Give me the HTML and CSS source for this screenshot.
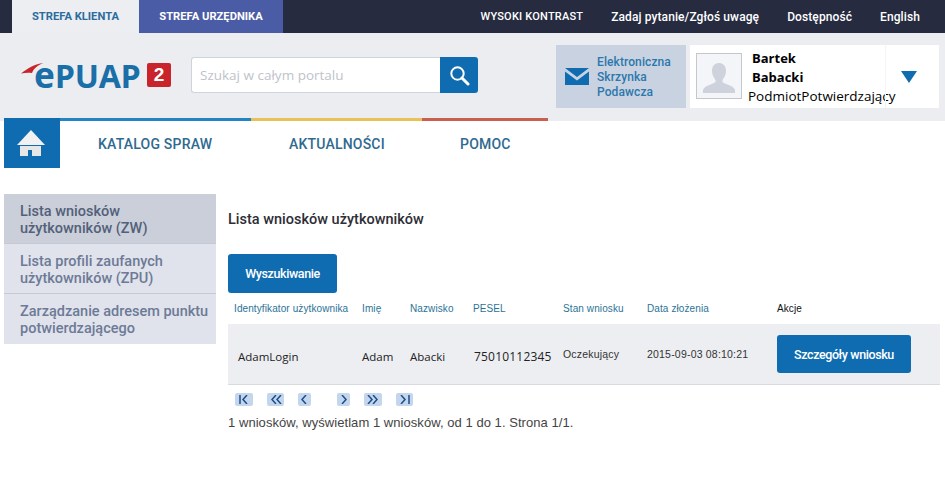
FILE: index.html
```html
<!doctype html>
<html lang="pl">
  <head>
    <meta charset="UTF-8" />
    <meta name="viewport" content="width=device-width, initial-scale=1.0" />
    <title>ePUAP - Lista wniosków użytkowników</title>
    <link rel="stylesheet" href="styles.css">
  </head>
  <body>
    <div class="top-bar">
      <a class="zone zone-client">STREFA KLIENTA</a>
      <a class="zone zone-clerk">STREFA URZĘDNIKA</a>
      <div class="top-links">
        <a class="contrast-link">WYSOKI KONTRAST</a>
        <a>Zadaj pytanie/Zgłoś uwagę</a>
        <a>Dostępność</a>
        <a>English</a>
      </div>
    </div>

    <header class="header">
      <div class="logo">
        <svg class="logo-swoosh" width="23" height="11" viewBox="0 0 23 11">
          <path d="M0 10.500 C7 5 14 1 22.500 0 C17 2 13 5 11 10 C7 9.500 4 9.800 0 10.500 Z" fill="#c8242c" />
        </svg>
        <span class="logo-text"><span class="logo-e">e</span>PUAP</span>
        <span class="logo-badge">2</span>
      </div>
      <div class="search">
        <input class="search-input" type="text" placeholder="Szukaj w całym portalu" />
        <button class="search-btn" aria-label="Szukaj">
          <svg width="22" height="22" viewBox="0 0 22 22" fill="none" stroke="#fff">
            <circle cx="9.500" cy="9.500" r="6.200" stroke-width="2" />
            <path d="M14 14 L20 20" stroke-width="3" stroke-linecap="round" />
          </svg>
        </button>
      </div>
      <a class="mailbox">
        <svg width="24" height="17" viewBox="0 0 24 17">
          <path d="M0 0 H24 L12 9 Z M0 3.500 L12 12.500 L24 3.500 V17 H0 Z" fill="#0f6cb0" />
        </svg>
        <span class="mailbox-label">Elektroniczna<br />Skrzynka<br />Podawcza</span>
      </a>
      <div class="user">
        <div class="avatar">
          <svg width="34" height="34" viewBox="0 0 34 34">
            <path d="M17 3 C22 3 24 7 24 11 C24 15 22 18 20.500 20 V22 C24 25 31 25 33 30 V33 H1 V30 C3 25 10 25 13.500 22 V20 C12 18 10 15 10 11 C10 7 12 3 17 3 Z" fill="#cdd2dc" />
          </svg>
        </div>
        <div class="user-info">
          <div class="user-name">Bartek</div>
          <div class="user-name">Babacki</div>
          <div class="user-role">PodmiotPotwierdzający</div>
        </div>
        <div class="user-toggle"><span class="arrow-down"></span></div>
      </div>
    </header>

    <nav class="nav">
      <a class="nav-home" aria-label="Strona główna">
        <svg width="28" height="26" viewBox="0 0 28 26">
          <path d="M14 0 L28 15 H0 Z" fill="#f1f1f1" />
          <path d="M3 16 H24 V26 H15 V20 H11 V26 H3 Z" fill="#e6e6e6" />
        </svg>
      </a>
      <a class="nav-item nav-blue">KATALOG SPRAW</a>
      <a class="nav-item nav-yellow">AKTUALNOŚCI</a>
      <a class="nav-item nav-red">POMOC</a>
    </nav>

    <main class="page">
      <aside class="side-menu">
        <a class="side-item active">Lista wniosków użytkowników (ZW)</a>
        <a class="side-item">Lista profili zaufanych użytkowników (ZPU)</a>
        <a class="side-item">Zarządzanie adresem punktu potwierdzającego</a>
      </aside>

      <section class="content">
        <h1 class="title">Lista wniosków użytkowników</h1>
        <button class="btn btn-search">Wyszukiwanie</button>
        <table class="requests">
          <thead>
            <tr>
              <th class="col-login">Identyfikator użytkownika</th>
              <th class="col-first">Imię</th>
              <th class="col-last">Nazwisko</th>
              <th class="col-pesel">PESEL</th>
              <th class="col-state">Stan wniosku</th>
              <th class="col-date">Data złożenia</th>
              <th class="col-actions">Akcje</th>
            </tr>
          </thead>
          <tbody>
            <tr>
              <td class="cell-open">AdamLogin</td>
              <td class="cell-open">Adam</td>
              <td class="cell-open">Abacki</td>
              <td class="cell-open cell-pesel">75010112345</td>
              <td class="cell-plain">Oczekujący</td>
              <td class="cell-plain">2015-09-03 08:10:21</td>
              <td><button class="btn btn-details">Szczegóły wniosku</button></td>
            </tr>
          </tbody>
        </table>
        <div class="pager">
          <a class="page-btn w18"><svg width="12" height="9" viewBox="0 0 12 9"><path d="M2 0 V9 M9 0 L5 4.500 L9 9" /></svg></a>
          <a class="page-btn w17"><svg width="12" height="9" viewBox="0 0 12 9"><path d="M6 0 L2 4.500 L6 9 M11 0 L7 4.500 L11 9" /></svg></a>
          <a class="page-btn w13 gap-wide"><svg width="7" height="9" viewBox="0 0 7 9"><path d="M5 0 L1 4.500 L5 9" /></svg></a>
          <a class="page-btn w13"><svg width="7" height="9" viewBox="0 0 7 9"><path d="M2 0 L6 4.500 L2 9" /></svg></a>
          <a class="page-btn w18"><svg width="12" height="9" viewBox="0 0 12 9"><path d="M1 0 L5 4.500 L1 9 M6 0 L10 4.500 L6 9" /></svg></a>
          <a class="page-btn w17"><svg width="12" height="9" viewBox="0 0 12 9"><path d="M2 0 L6 4.500 L2 9 M10 0 V9" /></svg></a>
        </div>
        <p class="summary">1 wniosków, wyświetlam 1 wniosków, od 1 do 1. Strona 1/1.</p>
      </section>
    </main>
  </body>
</html>
```

FILE: styles.css
```css
html,
body {
  margin: 0;
  background: #fff;
  font-family: 'Roboto', sans-serif;
}
a {
  text-decoration: none;
}
button {
  border: none;
  cursor: pointer;
}

/* top bar */
.top-bar {
  display: flex;
  align-items: stretch;
  height: 33px;
  padding: 0 25px 0 12px;
  background: #262b40;
}
.zone {
  display: flex;
  align-items: center;
  justify-content: center;
  font-size: 11.2px;
  font-weight: 700;
}
.zone-client {
  width: 127px;
  background: #eceef2;
  color: #2b6c9e;
}
.zone-clerk {
  width: 144px;
  background: #4a5ca5;
  color: #fff;
}
.top-links {
  display: flex;
  align-items: center;
  gap: 28px;
  margin-left: auto;
  color: #fff;
  font-size: 12px;
  font-weight: 500;
  letter-spacing: 0.1px;
}
.contrast-link {
  font-size: 11px;
  letter-spacing: 0.2px;
}

/* header */
.header {
  display: flex;
  align-items: flex-start;
  height: 88px;
  background: #ebedf1;
}
.logo {
  position: relative;
  display: flex;
  align-items: center;
  flex: none;
  width: 191px;
  height: 36px;
  margin-top: 24px;
  padding-left: 34px;
  box-sizing: border-box;
}
.logo-swoosh {
  position: absolute;
  left: 21px;
  top: 6px;
}
.logo-text {
  color: #1a6fa8;
  font-family: 'Noto Sans', sans-serif;
  font-size: 32px;
  font-weight: 700;
  line-height: 36px;
}
.logo-e {
  font-size: 35px;
}
.logo-badge {
  position: absolute;
  left: 147px;
  top: 6px;
  width: 24px;
  height: 24px;
  border-radius: 2px;
  background: #c9242b;
  color: #fff;
  font-family: 'Liberation Sans', sans-serif;
  font-size: 19px;
  font-weight: 700;
  line-height: 24px;
  text-align: center;
}
.search {
  display: flex;
  width: 287px;
  height: 36px;
  margin-top: 24px;
}
.search-input {
  flex: 1;
  min-width: 0;
  padding: 0 8px;
  border: 1px solid #cfd3dc;
  border-right: none;
  border-radius: 3px 0 0 3px;
  background: #fff;
  font-family: 'Open Sans', sans-serif;
  font-size: 13.5px;
}
.search-input::placeholder {
  color: #c0c3ca;
  opacity: 1;
}
.search-btn {
  display: flex;
  align-items: center;
  justify-content: center;
  width: 38px;
  padding: 0;
  border-radius: 0 3px 3px 0;
  background: #0f6cb0;
}
.mailbox {
  display: flex;
  align-items: center;
  gap: 8px;
  width: 130px;
  height: 63px;
  margin: 12px 0 0 78px;
  padding-left: 9px;
  box-sizing: border-box;
  background: #c9d2e1;
}
.mailbox-label {
  padding-top: 2px;
  color: #2b78ac;
  font-size: 12px;
  font-weight: 500;
  line-height: 15px;
  letter-spacing: 0.1px;
}
.user {
  display: flex;
  width: 249px;
  height: 63px;
  margin: 12px 0 0 4px;
  background: #fff;
}
.avatar {
  display: flex;
  align-items: flex-end;
  justify-content: center;
  flex: none;
  width: 46px;
  height: 46px;
  margin: 8px 0 0 6px;
  padding-bottom: 4px;
  box-sizing: border-box;
  border: 1px solid #c4c7cc;
  background: #f4f5f8;
}
.user-info {
  flex: 1;
  min-width: 0;
  padding: 4px 0 0 6px;
  color: #000;
  font-family: 'Open Sans', sans-serif;
  font-size: 13.5px;
}
.user-name {
  height: 19px;
  padding-left: 4px;
  font-size: 13px;
  font-weight: 700;
  line-height: 19px;
}
.user-role {
  line-height: 19px;
  white-space: nowrap;
}
.user-toggle {
  display: flex;
  align-items: center;
  justify-content: center;
  flex: none;
  width: 54px;
  padding: 1px 8px 0 0;
  box-sizing: border-box;
  border-left: 1px solid #f3f4f6;
}
.arrow-down {
  width: 0;
  height: 0;
  border-left: 8px solid transparent;
  border-right: 8px solid transparent;
  border-top: 12px solid #0f6cb0;
}

/* main nav */
.nav {
  display: flex;
  width: 544px;
  height: 50px;
  margin: -3px 0 0 4px;
}
.nav-home {
  display: flex;
  align-items: center;
  justify-content: center;
  width: 56px;
  padding-right: 2px;
  box-sizing: border-box;
  background: #0f6cb0;
}
.nav-item {
  box-sizing: border-box;
  padding-top: 15px;
  border-top: 3px solid;
  background: #fff;
  color: #2f6a8f;
  font-size: 14px;
  font-weight: 500;
  letter-spacing: 0.2px;
}
.nav-blue {
  width: 191px;
  padding-left: 38px;
  border-color: #2383c4;
}
.nav-yellow {
  width: 171px;
  padding-left: 38px;
  border-color: #e8c258;
}
.nav-red {
  width: 126px;
  padding-left: 38px;
  border-color: #c9604f;
}

/* page */
.page {
  display: flex;
  align-items: flex-start;
  padding: 26px 5px 0 4px;
}
.side-menu {
  flex: none;
  width: 212px;
}
.side-item {
  display: block;
  box-sizing: border-box;
  height: 50px;
  padding: 9px 4px 0 16px;
  border-bottom: 1px solid #c5c9d3;
  background: #e0e3eb;
  color: #6d7a97;
  font-size: 14.5px;
  font-weight: 500;
  line-height: 17px;
}
.side-item:last-child {
  border-bottom: none;
}
.side-item.active {
  background: #cbcfda;
  color: #526179;
}
.content {
  flex: 1;
  margin-left: 12px;
}
.title {
  margin: 17px 0 0;
  color: #2e2e36;
  font-size: 14.5px;
  font-weight: 500;
  line-height: 17px;
}
.btn {
  border-radius: 3px;
  background: #0f6cb0;
  color: #fff;
  font-family: 'Roboto', sans-serif;
  font-size: 12.5px;
  font-weight: 500;
  letter-spacing: -0.4px;
}
.btn-search {
  display: block;
  width: 109px;
  height: 39px;
  margin-top: 26px;
  padding: 0;
}
.requests {
  width: 712px;
  border-collapse: collapse;
  table-layout: fixed;
}
.requests th {
  height: 31px;
  padding: 0;
  color: #2b7396;
  font-family: 'Liberation Sans', sans-serif;
  font-size: 10px;
  font-weight: 400;
  letter-spacing: 0.1px;
  text-align: left;
}
.requests td {
  height: 60px;
  padding: 0;
  border-bottom: 1px solid #d9dbe0;
  background: #eceef2;
  vertical-align: middle;
}
.col-login {
  width: 134px;
  box-sizing: border-box;
  padding-left: 6px !important;
}
.col-first {
  width: 48px;
}
.col-last {
  width: 63px;
}
.col-pesel {
  width: 90px;
}
.col-state {
  width: 84px;
}
.col-date {
  width: 130px;
}
.requests .col-actions {
  color: #111;
}
.requests .cell-open {
  height: 55px;
  padding-top: 5px;
  color: #222;
  font-family: 'Open Sans', sans-serif;
  font-size: 11.5px;
}
.requests .cell-open:first-child {
  padding-left: 10px;
}
.requests .cell-pesel {
  padding-left: 1px;
  font-size: 12px;
  letter-spacing: 0.2px;
}
.requests .cell-plain {
  color: #333;
  font-family: 'Liberation Sans', sans-serif;
  font-size: 10.5px;
  letter-spacing: 0.2px;
}
.btn-details {
  display: block;
  width: 134px;
  height: 38px;
  padding: 0;
}
.pager {
  display: flex;
  align-items: center;
  gap: 14px;
  height: 13px;
  margin: 8px 0 0 7px;
}
.page-btn {
  display: flex;
  align-items: center;
  justify-content: center;
  height: 13px;
  border-radius: 2px;
  background: #c4d6ee;
}
.page-btn path {
  fill: none;
  stroke: #1b4f86;
  stroke-width: 1.5;
}
.w18 {
  width: 18px;
}
.w17 {
  width: 17px;
}
.w13 {
  width: 13px;
}
.gap-wide {
  margin-right: 12px;
}
.summary {
  margin: 10px 0 0;
  color: #444;
  font-family: 'Liberation Sans', sans-serif;
  font-size: 13px;
  line-height: 14px;
  letter-spacing: 0.05px;
}
```
